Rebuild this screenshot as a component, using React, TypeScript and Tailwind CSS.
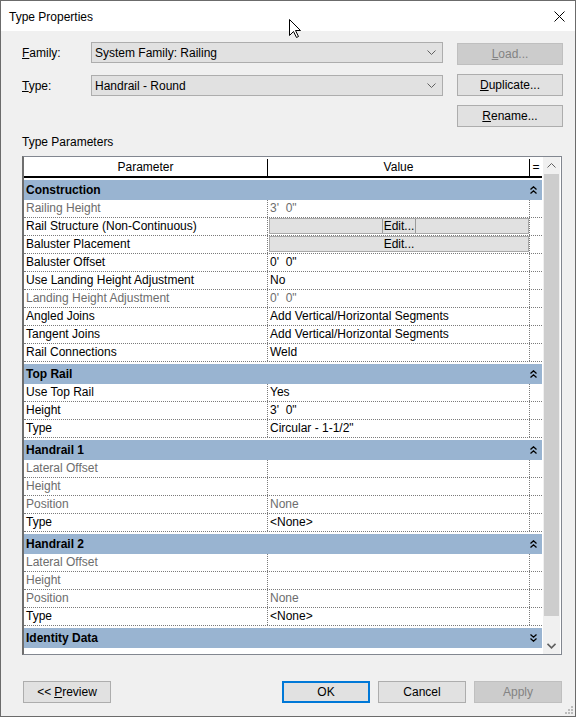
import React from "react";

type Row = {
  name: string;
  value?: string;
  muted?: boolean;
  edit?: "focus" | "plain";
};

type Group = { title: string; rows: Row[]; collapsed?: boolean };

const groups: Group[] = [
  {
    title: "Construction",
    rows: [
      { name: "Railing Height", value: "3'  0\"", muted: true },
      { name: "Rail Structure (Non-Continuous)", edit: "focus" },
      { name: "Baluster Placement", edit: "plain" },
      { name: "Baluster Offset", value: "0'  0\"" },
      { name: "Use Landing Height Adjustment", value: "No" },
      { name: "Landing Height Adjustment", value: "0'  0\"", muted: true },
      { name: "Angled Joins", value: "Add Vertical/Horizontal Segments" },
      { name: "Tangent Joins", value: "Add Vertical/Horizontal Segments" },
      { name: "Rail Connections", value: "Weld" },
    ],
  },
  {
    title: "Top Rail",
    rows: [
      { name: "Use Top Rail", value: "Yes" },
      { name: "Height", value: "3'  0\"" },
      { name: "Type", value: "Circular - 1-1/2\"" },
    ],
  },
  {
    title: "Handrail 1",
    rows: [
      { name: "Lateral Offset", muted: true },
      { name: "Height", muted: true },
      { name: "Position", value: "None", muted: true },
      { name: "Type", value: "<None>" },
    ],
  },
  {
    title: "Handrail 2",
    rows: [
      { name: "Lateral Offset", muted: true },
      { name: "Height", muted: true },
      { name: "Position", value: "None", muted: true },
      { name: "Type", value: "<None>" },
    ],
  },
  { title: "Identity Data", rows: [], collapsed: true },
];

function Chevrons({ down }: { down?: boolean }) {
  return (
    <svg width="7" height="8" viewBox="0 0 7 8" className={down ? "rotate-180" : ""}>
      <path
        d="M0.5 3.5 L3.5 0.8 L6.5 3.5 M0.5 7.5 L3.5 4.8 L6.5 7.5"
        stroke="black"
        strokeWidth="1.3"
        fill="none"
      />
    </svg>
  );
}

function WinButton({
  children,
  disabled,
  primary,
  className = "",
}: {
  children: React.ReactNode;
  disabled?: boolean;
  primary?: boolean;
  className?: string;
}) {
  const look = disabled
    ? "border border-[#bfbfbf] bg-[#cccccc] text-[#838383]"
    : primary
      ? "border-2 border-[#0078d7] bg-[#e1e1e1] text-black"
      : "border border-[#adadad] bg-[#e1e1e1] text-black";
  return (
    <div
      className={`flex h-[22px] w-[88px] items-center justify-center text-[12px] ${look} ${className}`}
    >
      {children}
    </div>
  );
}

function Combo({ text }: { text: string }) {
  return (
    <div className="flex h-[21px] w-[352px] items-center border border-[#adadad] bg-[#e1e1e1] pl-[3px] pr-[6px]">
      <span className="flex-1">{text}</span>
      <svg width="9" height="5" viewBox="0 0 9 5">
        <path d="M0.5 0.5 L4.5 4.5 L8.5 0.5" stroke="#606060" fill="none" />
      </svg>
    </div>
  );
}

function PropRow({ row }: { row: Row }) {
  const tone = row.muted ? "text-[#6d6d6d]" : "text-black";
  return (
    <div className="flex h-[18px] border-b border-dotted border-[#7a7a7a]">
      <div
        className={`w-[244px] shrink-0 border-r border-dotted border-[#7a7a7a] pl-[2px] leading-[17px] ${tone}`}
      >
        {row.name}
      </div>
      <div
        className={`w-[262px] shrink-0 border-r border-dotted border-[#7a7a7a] whitespace-pre leading-[17px] ${tone}`}
      >
        {row.edit ? (
          <div className="ml-[1px] flex h-[16px] items-center justify-center border border-[#a9a9a9] bg-[#e1e1e1] leading-[14px] text-black">
            {row.edit === "focus" ? (
              <span className="border-x border-[#9a9a9a] px-[1px]">Edit...</span>
            ) : (
              <span>Edit...</span>
            )}
          </div>
        ) : (
          <span className="pl-[2px]">{row.value ?? ""}</span>
        )}
      </div>
      <div className="w-[12px] shrink-0" />
    </div>
  );
}

function GroupBlock({ group }: { group: Group }) {
  return (
    <div>
      <div className="pt-[2px]">
        <div className="flex h-[20px] items-center bg-[#99b4d1] font-bold">
          <span className="w-[506px] pl-[2px]">{group.title}</span>
          <span className="flex w-[12px] justify-start">
            <Chevrons down={group.collapsed} />
          </span>
        </div>
      </div>
      {group.rows.map((r, i) => (
        <PropRow key={i} row={r} />
      ))}
    </div>
  );
}

export default function App() {
  return (
    <div className="relative flex h-[717px] w-[576px] flex-col border border-[#6b6b6b] bg-[#f0f0f0] font-['Liberation_Sans',Arial,sans-serif] text-[12px] text-black">
      {/* title bar */}
      <div className="flex h-[30px] items-center justify-between bg-white pl-[8px] pr-[10px] pt-[1px]">
        <span className="text-[12px]">Type Properties</span>
        <svg width="11" height="11" viewBox="0 0 11 11">
          <path d="M0.5 0.5 L10.5 10.5 M10.5 0.5 L0.5 10.5" stroke="black" strokeWidth="1" />
        </svg>
      </div>

      {/* family / type */}
      <div className="flex pl-[21px]">
        <div className="flex flex-col gap-[12px] pt-[11px]">
          <div className="flex items-center">
            <span className="w-[69px]">
              <span className="underline">F</span>amily:
            </span>
            <Combo text="System Family: Railing" />
          </div>
          <div className="flex items-center">
            <span className="w-[69px]">
              <span className="underline">T</span>ype:
            </span>
            <Combo text="Handrail - Round" />
          </div>
        </div>
        <div className="ml-[14px] flex flex-col gap-[9px] pt-[12px]">
          <WinButton disabled className="w-[106px]">
            <span className="underline">L</span>oad...
          </WinButton>
          <WinButton className="w-[106px]">
            <span className="underline">D</span>uplicate...
          </WinButton>
          <WinButton className="w-[106px]">
            <span className="underline">R</span>ename...
          </WinButton>
        </div>
      </div>

      <div className="mt-[8px] pl-[21px] leading-[14px]">Type Parameters</div>

      {/* property grid */}
      <div className="ml-[21px] mt-[7px] flex h-[499px] w-[540px] border border-l-2 border-[#828790] border-l-[#6e6e6e] bg-white">
        <div className="flex w-[518px] flex-col">
          <div className="flex h-[21px] shrink-0 border-b-2 border-black pt-[2px]">
            <div className="w-[244px] border-r border-black text-center leading-[17px]">Parameter</div>
            <div className="w-[262px] border-r border-black text-center leading-[17px]">Value</div>
            <div className="w-[12px] text-center leading-[17px]">=</div>
          </div>
          {groups.map((g) => (
            <GroupBlock key={g.title} group={g} />
          ))}
        </div>
        <div className="ml-[1px] flex w-[17px] flex-col bg-[#f0f0f0]">
          <div className="flex h-[17px] items-center justify-center">
            <svg width="9" height="5" viewBox="0 0 9 5">
              <path d="M0.5 4.5 L4.5 0.5 L8.5 4.5" stroke="#606060" fill="none" />
            </svg>
          </div>
          <div className="mx-[1px] h-[442px] bg-[#cdcdcd]" />
          <div className="flex-1" />
          <div className="flex h-[17px] items-center justify-center">
            <svg width="9" height="6" viewBox="0 0 9 6">
              <path d="M0.5 0.8 L4.5 4.8 L8.5 0.8" stroke="#606060" strokeWidth="1.6" fill="none" />
            </svg>
          </div>
        </div>
      </div>

      {/* bottom buttons */}
      <div className="mt-[26px] flex pl-[22px]">
        <WinButton>
          &lt;&lt; <span className="ml-[3px] underline">P</span>review
        </WinButton>
        <div className="ml-[171px] flex gap-[8px]">
          <WinButton primary>OK</WinButton>
          <WinButton>Cancel</WinButton>
          <WinButton disabled>Apply</WinButton>
        </div>
      </div>

      {/* size grip */}
      <svg className="absolute bottom-[1px] right-[1px]" width="10" height="10" viewBox="0 0 10 10">
        {[
          [7, 1],
          [4, 4],
          [7, 4],
          [1, 7],
          [4, 7],
          [7, 7],
        ].map(([x, y], i) => (
          <rect key={i} x={x} y={y} width="2" height="2" fill="#bcbcbc" />
        ))}
      </svg>

      {/* mouse cursor */}
      <svg className="absolute left-[288px] top-[18px]" width="13" height="20" viewBox="0 0 13 20">
        <path
          d="M0.5 0.5 L0.5 16.5 L4.5 12.5 L7.5 18.5 L9.5 17.5 L6.5 11.5 L11.5 11.5 Z"
          fill="white"
          stroke="black"
          strokeWidth="1"
        />
      </svg>
    </div>
  );
}
